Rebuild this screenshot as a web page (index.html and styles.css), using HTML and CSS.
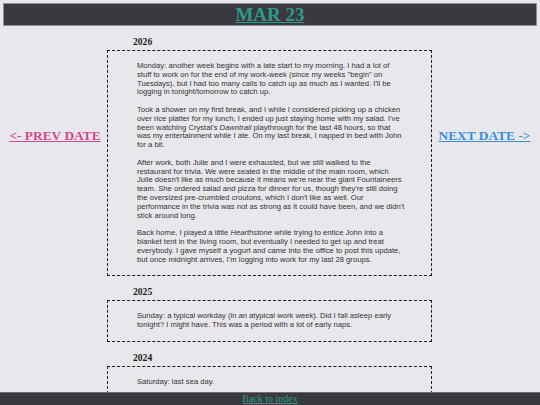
FILE: index.html
```html
<!DOCTYPE html>
<html lang="en">
<head>
    <meta charset="UTF-8">
    <meta name="viewport" content="width=device-width, initial-scale=1.0">
    <title>Mar 23</title>
    <link rel="stylesheet" href="styles.css">
</head>
<body>
    <header class="top-bar">
        <a href="#" class="day-title">MAR 23</a>
    </header>

    <div class="page">
        <nav class="side prev">
            <a href="#">&lt;- PREV DATE</a>
        </nav>

        <main class="entries">
            <section class="entry">
                <h3>2026</h3>
                <div class="entry-box">
                    <p>Monday: another week begins with a late start to my morning. I had a lot of stuff to work on for the end of my work-week (since my weeks "begin" on Tuesdays), but I had too many calls to catch up as much as I wanted. I'll be logging in tonight/tomorrow to catch up.</p>
                    <p>Took a shower on my first break, and I while I considered picking up a chicken over rice platter for my lunch, I ended up just staying home with my salad. I've been watching Crystal's <em>Dawntrail</em> playthrough for the last 48 hours, so that was my entertainment while I ate. On my last break, I napped in bed with John for a bit.</p>
                    <p>After work, both Julie and I were exhausted, but we still walked to the restaurant for trivia. We were seated in the middle of the main room, which Julie doesn't like as much because it means we're near the giant Fountaineers team. She ordered salad and pizza for dinner for us, though they're still doing the oversized pre-crumbled croutons, which I don't like as well. Our performance in the trivia was not as strong as it could have been, and we didn't stick around long.</p>
                    <p>Back home, I played a little <em>Hearthstone</em> while trying to entice John into a blanket tent in the living room, but eventually I needed to get up and treat everybody. I gave myself a yogurt and came into the office to post this update, but once midnight arrives, I'm logging into work for my last 28 groups.</p>
                </div>
            </section>

            <section class="entry">
                <h3>2025</h3>
                <div class="entry-box">
                    <p>Sunday: a typical workday (in an atypical work week). Did I fall asleep early tonight? I might have. This was a period with a lot of early naps.</p>
                </div>
            </section>

            <section class="entry">
                <h3>2024</h3>
                <div class="entry-box">
                    <p>Saturday: last sea day.</p>
                </div>
            </section>
        </main>

        <nav class="side next">
            <a href="#">NEXT DATE -&gt;</a>
        </nav>
    </div>

    <footer class="bottom-bar">
        <a href="#">Back to index</a>
    </footer>
</body>
</html>
```

FILE: styles.css
```css
body {
    margin: 0;
    padding: 3px;
    background-color: #e8e8ec;
    font-family: "Liberation Serif", "Times New Roman", serif;
    color: #222;
}

.top-bar {
    background-color: #3a3a3e;
    border: 1px solid #8d8d93;
    height: 21px;
    text-align: center;
}

.day-title {
    font-size: 19px;
    line-height: 21px;
    font-weight: bold;
    color: #2e9a8b;
}

.page {
    display: grid;
    grid-template-columns: 104px 325px 1fr;
    padding-bottom: 30px;
}

.side {
    text-align: center;
    padding-top: 100px;
}

.side a {
    font-size: 13.4px;
    font-weight: bold;
}

.prev a {
    color: #d4468e;
}

.next a {
    color: #3a8ed6;
}

.entry h3 {
    margin: 10px 0 3px 26px;
    font-size: 9.6px;
    line-height: 11px;
    color: #1e1e1e;
}

.entry-box {
    border: 1px dashed #1c1c1c;
    padding: 11px 26px 11px 29px;
    font-family: "Liberation Sans", Arial, sans-serif;
    font-size: 7.65px;
    line-height: 8.8px;
    color: #333;
}

.entry-box p {
    margin: 0 0 8.8px;
}

.entry-box p:last-child {
    margin-bottom: 0;
}

/* footer stays pinned over the page content */
.bottom-bar {
    position: fixed;
    left: 0;
    right: 0;
    bottom: 0;
    height: 12px;
    background-color: #3a3a3e;
    border-top: 1px solid #6d6d72;
    text-align: center;
}

.bottom-bar a {
    font-size: 10px;
    line-height: 12px;
    color: #2e9a8b;
    display: block;
}
```
